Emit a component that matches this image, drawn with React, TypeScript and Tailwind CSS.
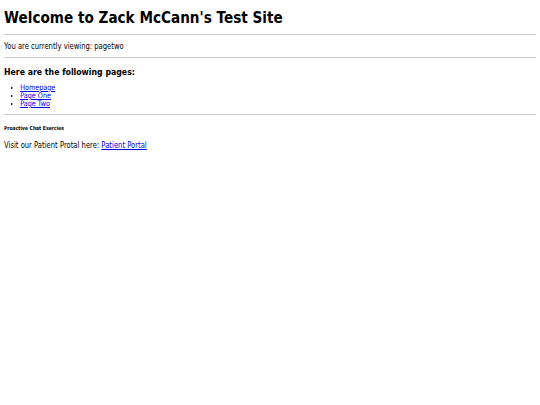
export default function App() {
  return (
    <div className="min-h-[405px] bg-white px-[4px] text-black" style={{ fontFamily: '"DejaVu Sans", sans-serif' }}>
      <h1 className="origin-left scale-x-[0.85] pt-[9px] text-[16px] font-bold leading-[17px]">Welcome to Zack McCann's Test Site</h1>
      <hr className="mt-[8px] border-t border-[#cfcfcf]" />
      <p className="mt-[7px] origin-left scale-x-[0.85] text-[8px] leading-[9px]">You are currently viewing: pagetwo</p>
      <hr className="mt-[6px] border-t border-[#cfcfcf]" />
      <h3 className="mt-[8px] origin-left scale-x-[0.85] text-[9.2px] font-bold leading-[11px]">Here are the following pages:</h3>
      <ul className="mt-[7px] origin-left scale-x-[0.85] list-disc pl-[19px] text-[7.6px] leading-[8px]">
        <li><a href="#" className="text-[#0000ee] underline decoration-1 underline-offset-[0.5px]">Homepage</a></li>
        <li><a href="#" className="text-[#0000ee] underline decoration-1 underline-offset-[0.5px]">Page One</a></li>
        <li><a href="#" className="text-[#0000ee] underline decoration-1 underline-offset-[0.5px]">Page Two</a></li>
      </ul>
      <hr className="mt-[6px] border-t border-[#cfcfcf]" />
      <h5 className="mt-[10px] origin-left scale-x-[0.85] text-[5.3px] font-bold leading-[7px]">Proactive Chat Exercies</h5>
      <p className="mt-[9px] origin-left scale-x-[0.85] text-[8px] leading-[9px]">
        Visit our Patient Protal here: <a href="#" className="text-[#0000ee] underline decoration-1 underline-offset-[1px]">Patient Portal</a>
      </p>
    </div>
  );
}
